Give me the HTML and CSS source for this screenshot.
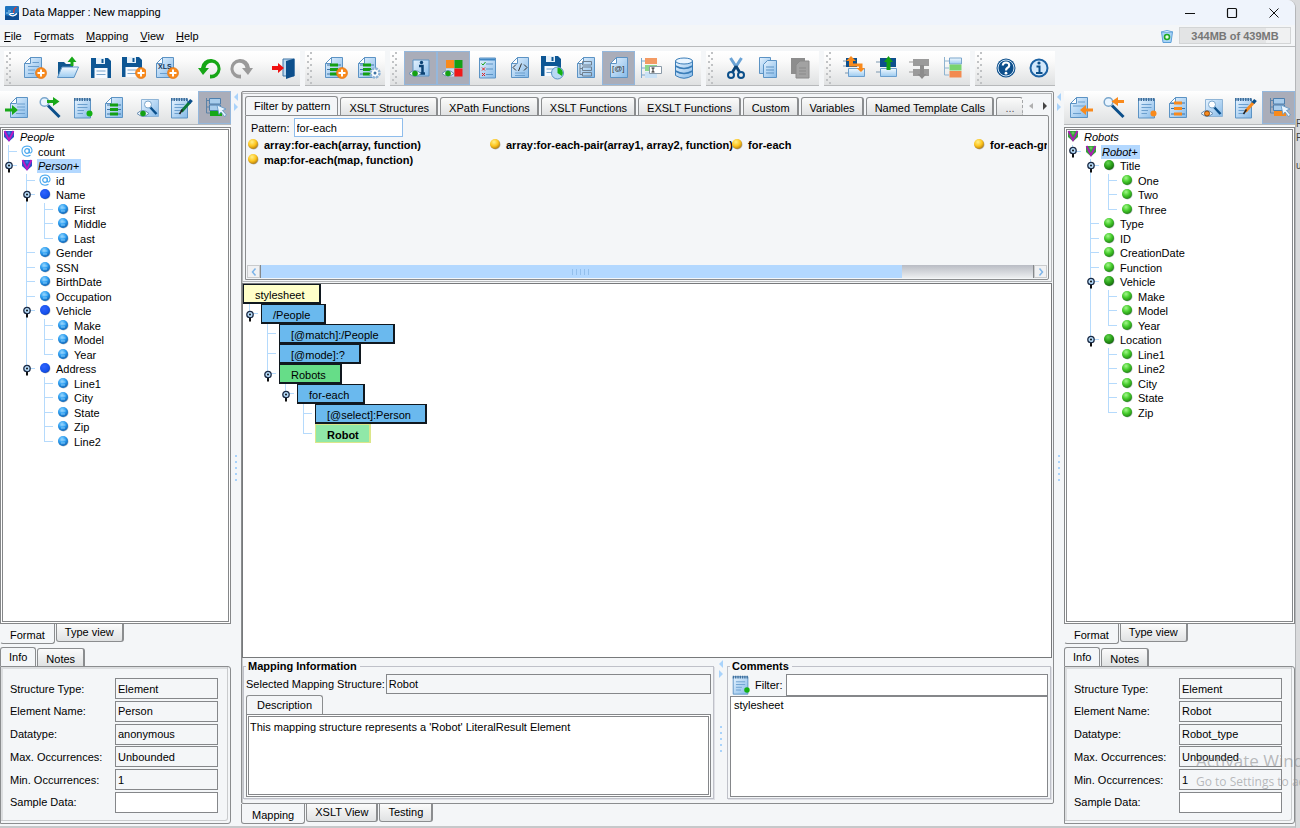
FILE: index.html
```html
<!DOCTYPE html>
<html lang="en">
<head>
<meta charset="utf-8">
<title>Data Mapper : New mapping</title>
<link rel="stylesheet" href="styles.css">
</head>
<body>
<svg class="sprite" aria-hidden="true">
  <defs>
    <linearGradient id="pg" x1="0" y1="0" x2="1" y2="1"><stop offset="0" stop-color="#e6f3ff"/><stop offset="1" stop-color="#86bae8"/></linearGradient>
    <linearGradient id="bx" x1="0" y1="0" x2="0" y2="1"><stop offset="0" stop-color="#f2f9ff"/><stop offset="1" stop-color="#9ccbf0"/></linearGradient>
    <radialGradient id="ball-sky" cx=".4" cy=".3" r=".75"><stop offset="0" stop-color="#8fd4ff"/><stop offset=".5" stop-color="#2b9df0"/><stop offset="1" stop-color="#0f5fae"/></radialGradient>
    <radialGradient id="ball-blue" cx=".4" cy=".35" r=".75"><stop offset="0" stop-color="#2f63ff"/><stop offset=".7" stop-color="#1450ea"/><stop offset="1" stop-color="#0b2f9a"/></radialGradient>
    <radialGradient id="ball-lime" cx=".4" cy=".3" r=".75"><stop offset="0" stop-color="#a4f78c"/><stop offset=".5" stop-color="#45cc2c"/><stop offset="1" stop-color="#1f7a12"/></radialGradient>
    <radialGradient id="ball-green" cx=".4" cy=".3" r=".75"><stop offset="0" stop-color="#66d452"/><stop offset=".5" stop-color="#2da61c"/><stop offset="1" stop-color="#145c0c"/></radialGradient>
    <radialGradient id="ball-gold" cx=".4" cy=".3" r=".75"><stop offset="0" stop-color="#fff08a"/><stop offset=".55" stop-color="#fdc41c"/><stop offset="1" stop-color="#a87412"/></radialGradient>
  </defs>
  <symbol id="page" viewBox="0 0 24 24"><path d="M7.500 1.500H18.500V21.500H1.500V7.500Z" fill="url(#pg)" stroke="#5c93c4"/><path d="M7.500 1.500V7.500H1.500Z" fill="#fff" stroke="#5c93c4"/></symbol>
  <symbol id="plus" viewBox="0 0 24 24"><circle cx="18" cy="17" r="5.500" fill="#f98a1c" stroke="#e06d08" stroke-width=".6"/><path d="M18 13.500V20.500M14.500 17H21.500" stroke="#fff" stroke-width="2"/></symbol>
  <symbol id="eye" viewBox="0 0 24 24"><path d="M0 17.500Q6 11.500 12 17.500Q6 23 0 17.500Z" fill="#e9f2fa" stroke="#6a8fb3"/></symbol>
  <symbol id="new" viewBox="0 0 24 24"><use href="#page"/><path d="M9.500 6.500H16M5 10.500H16M5 14H12M5 17.500H11" stroke="#6b9fce"/><use href="#plus"/></symbol>
  <symbol id="open" viewBox="0 0 24 24"><path d="M2 20V6H8L10 8H17V20Z" fill="#11578f"/><path d="M6 11H22.500L18 21.500H1.500Z" fill="url(#bx)" stroke="#5c93c4"/><path d="M14.500 10V6H11.500L16 .5L20.500 6H17.500V10Z" fill="#18a818"/></symbol>
  <symbol id="save" viewBox="0 0 24 24"><path d="M2 2H19L22 5V22H2Z" fill="#0d5694"/><path d="M7 2H16V8H7Z" fill="#e6f1fa"/><path d="M12.500 3H14.500V7H12.500Z" fill="#0d5694"/><path d="M5.500 12H18.500V22H5.500Z" fill="#f6faff"/><path d="M7.500 15H16.500M7.500 18.500H16.500" stroke="#7aa6cc"/></symbol>
  <symbol id="saveas" viewBox="0 0 24 24"><use href="#save" x="-2" y="-1"/><use href="#plus" x="1" y="0"/></symbol>
  <symbol id="xls" viewBox="0 0 24 24"><use href="#page"/><path d="M5 17.500H12" stroke="#6b9fce"/><text x="3" y="13" class="glyph-xls">XLS</text><use href="#plus"/></symbol>
  <symbol id="undo" viewBox="0 0 24 24"><path d="M1 12L6 19L12 12H8.500A6 6 0 1 1 13 18.500V22.500A9.800 9.800 0 1 0 4 12Z" fill="#16a616"/></symbol>
  <symbol id="redo" viewBox="0 0 24 24"><path d="M23 12L18 19L12 12H15.500A6 6 0 1 0 11 18.500V22.500A9.800 9.800 0 1 1 20 12Z" fill="#9a9a9a"/></symbol>
  <symbol id="exit" viewBox="0 0 24 24"><path d="M11 3H22V20H11Z" fill="#bcd9f0" stroke="#3f74a5"/><path d="M22.500 2.500V20L14 23V5Z" fill="#0d4f8c"/><path d="M0 10H6V7L12 12L6 17V14H0Z" fill="#f01010"/></symbol>
  <symbol id="rows-g" viewBox="0 0 24 24"><use href="#page"/><path d="M3 9H6M14 9H17M3 13.500H6M14 13.500H17M3 18H6M14 18H17" stroke="#3f74a5"/><path d="M6 9H14M6 13.500H14M6 18H14" stroke="#14a014" stroke-width="3"/></symbol>
  <symbol id="rows-o" viewBox="0 0 24 24"><use href="#page"/><path d="M3 7H6M14 7H17M3 12.500H6M14 12.500H17M3 18H6M14 18H17" stroke="#3f74a5"/><path d="M6 7H14M6 12.500H14M6 18H14" stroke="#f98a1c" stroke-width="3"/></symbol>
  <symbol id="rowsadd" viewBox="0 0 24 24"><use href="#rows-g"/><use href="#plus"/></symbol>
  <symbol id="rowscfg" viewBox="0 0 24 24"><use href="#rows-g"/><circle cx="18" cy="17" r="4.500" fill="#fff" stroke="#8fb4d6" stroke-width="2.500" stroke-dasharray="2.500 1"/><circle cx="18" cy="17" r="1.500" fill="#3f74a5"/></symbol>
  <symbol id="infoeye" viewBox="0 0 24 24"><path d="M4 4H20V20H4Z" fill="url(#pg)" stroke="#5c93c4"/><path d="M10 10H13.500V17M10 17.500H16" stroke="#0b4274" stroke-width="2.500" fill="none"/><circle cx="12.500" cy="6.500" r="1.700" fill="#0b4274"/><use href="#eye"/><circle cx="6" cy="17.500" r="2.800" fill="#14a014"/></symbol>
  <symbol id="coloreye" viewBox="0 0 24 24"><path d="M4 4H12V12H4Z" fill="#f98a1c"/><path d="M12.500 4H20.500V12H12.500Z" fill="#14a014"/><path d="M4 12.500H12V20.500H4Z" fill="#c9e1f5"/><path d="M12.500 12.500H20.500V20.500H12.500Z" fill="#f01818"/><use href="#eye"/><circle cx="6" cy="17.500" r="2.800" fill="#14a014"/></symbol>
  <symbol id="check" viewBox="0 0 24 24"><path d="M4.500 2H20.500V22H4.500Z" fill="url(#pg)" stroke="#5c93c4"/><path d="M5 3.500H20" stroke="#3f87c4" stroke-width="2"/><path d="M11 8H18M11 13H18M11 18.500H18" stroke="#5c93c4"/><path d="M6.500 7.500L8 9L10.500 6" stroke="#14a014" fill="none"/><path d="M7 11.500L10 14.500M10 11.500L7 14.500M7 17L10 20M10 17L7 20" stroke="#e02020"/></symbol>
  <symbol id="code" viewBox="0 0 24 24"><use href="#page" x="2" y="0"/><path d="M7 17H17M7 19.500H17" stroke="#6b9fce"/><path d="M8 8.500L5 11.500L8 14.500M16 8.500L19 11.500L16 14.500M13.500 7.500L10.500 15" stroke="#333" fill="none"/></symbol>
  <symbol id="savetime" viewBox="0 0 24 24"><use href="#save" x="-2" y="-2"/><circle cx="16.500" cy="17" r="6" fill="#b9daf4" stroke="#5c93c4"/><path d="M16.500 17V11.500A5.500 5.500 0 0 1 21 20Z" fill="#14b014"/></symbol>
  <symbol id="fields" viewBox="0 0 24 24"><use href="#page" x="2" y="0"/><path d="M8.500 5.500H17.500V9H8.500ZM8.500 11H17.500V14.500H8.500ZM8.500 16.500H17.500V20H8.500ZM6 7.500V18.500H8.500M6 12.500H8.500" fill="none" stroke="#6f7f8f"/></symbol>
  <symbol id="attr" viewBox="0 0 24 24"><use href="#page" x="2" y="0"/><text x="5" y="15" class="glyph-at">[@]</text></symbol>
  <symbol id="rename" viewBox="0 0 24 24"><path d="M1.500 2V22M1.500 5H5M1.500 12H5M1.500 19H5" stroke="#7aa6cc" fill="none"/><path d="M5 2H17V8H5Z" fill="#f39a63"/><path d="M5 9H17V15H5Z" fill="#8ed68b"/><path d="M5 16H17V22H5Z" fill="#c9e1f5"/><path d="M9.500 10.500H21.500V17.500H9.500Z" fill="#fff" stroke="#8a9aa8"/><path d="M11.500 12H14.500M13 12V16M11.500 16H14.500" stroke="#222"/></symbol>
  <symbol id="db" viewBox="0 0 24 24"><path d="M2.500 5V19.500Q11 25 19.500 19.500V5Z" fill="url(#pg)" stroke="#3a7db8"/><ellipse cx="11" cy="5" rx="8.500" ry="3" fill="#eaf5ff" stroke="#3a7db8"/><path d="M2.500 10Q11 15 19.500 10M2.500 15Q11 20 19.500 15" fill="none" stroke="#3a7db8" stroke-width="1.500"/></symbol>
  <symbol id="cut" viewBox="0 0 24 24"><path d="M5.500 2L14.500 16M16.500 2L7.500 16" stroke="#6aa3d6" stroke-width="3"/><path d="M11 10L14.500 16M11 10L7.500 16" stroke="#0b4274" stroke-width="2.500"/><circle cx="6" cy="19" r="3" fill="none" stroke="#0b4f8a" stroke-width="2"/><circle cx="16" cy="19" r="3" fill="none" stroke="#0b4f8a" stroke-width="2"/></symbol>
  <symbol id="copy" viewBox="0 0 24 24"><path d="M1.500 1.500H12.500V17.500H1.500Z" fill="url(#pg)" stroke="#5c93c4"/><path d="M9.500 4.500H18.500V21.500H5.500V8.500Z" fill="url(#pg)" stroke="#5c93c4"/><path d="M8 11H16M8 14H16M8 17H16" stroke="#5c93c4"/></symbol>
  <symbol id="paste" viewBox="0 0 24 24"><path d="M0 2H14V18H0Z" fill="#8d8d8d"/><path d="M9 5H18V22H5V9Z" fill="#a2a2a2" stroke="#8a8a8a"/><path d="M8 12H15M8 15H15M8 18H15" stroke="#8a8a8a"/></symbol>
  <symbol id="swap" viewBox="0 0 24 24"><path d="M0 5H3M0 10H3M2 17H6" stroke="#7a97b0"/><path d="M3 2H14V11H3Z" fill="#0d4f8c"/><path d="M5.500 12.500H21.500V20.500H5.500Z" fill="url(#bx)" stroke="#6b9fce"/><path d="M6 5H3L8 0L13 5H10V7.500H19.500V12H22L18 16L13.500 12H16V10.500H6Z" fill="#f98a1c"/></symbol>
  <symbol id="moveup" viewBox="0 0 24 24"><path d="M0 6H4M0 16H4" stroke="#7a97b0"/><path d="M4 2H20V11H4Z" fill="#0d4f8c"/><path d="M4.500 12.500H20.500V20.500H4.500Z" fill="url(#bx)" stroke="#6b9fce"/><path d="M10.500 14V6H8L12.500 0L17 6H14.500V14Z" fill="#14a014"/></symbol>
  <symbol id="movedn" viewBox="0 0 24 24"><path d="M0 6H4M0 16H4" stroke="#999"/><path d="M4 3H20V10H4ZM4 13H20V20H4Z" fill="#9b9b9b"/><path d="M11 9H15V18H17.500L13 23L8.500 18H11Z" fill="#8c8c8c"/></symbol>
  <symbol id="stack" viewBox="0 0 24 24"><path d="M2.500 1V19H7M2.500 5H7M2.500 12H7" stroke="#8fb4d0" fill="none"/><path d="M7.500 2H19.500V8H7.500Z" fill="url(#bx)" stroke="#7aa6cc"/><path d="M7.500 8.500H19.500V14.500H7.500Z" fill="#79d36e"/><path d="M7.500 15H19.500V21.500H7.500Z" fill="#f28b51"/></symbol>
  <symbol id="help" viewBox="0 0 24 24"><circle cx="12" cy="12" r="9.500" fill="#0d4f8c"/><circle cx="12" cy="12" r="8" fill="none" stroke="#cfe4f6"/><path d="M8.800 9.500Q9 6.500 12 6.500Q15.300 6.500 15.200 9.500Q15.200 11 13.300 12Q12 12.800 12 14.500" fill="none" stroke="#fff" stroke-width="2.200"/><circle cx="12" cy="17.200" r="1.400" fill="#fff"/></symbol>
  <symbol id="about" viewBox="0 0 24 24"><circle cx="12" cy="12" r="8.500" fill="#d3e8fb" stroke="#1d62a3" stroke-width="2"/><path d="M9.500 10.500H12.500V16.500M9 17H15.500" stroke="#0b4f8a" stroke-width="2" fill="none"/><circle cx="12" cy="7" r="1.600" fill="#0b4f8a"/></symbol>
  <symbol id="in-g" viewBox="0 0 24 24"><use href="#page" x="4" y="0"/><path d="M12 8H20M12 11H20M13 14H20M11 17.500H20" stroke="#6b9fce"/><path d="M0 12.500H7V9L13 14L7 19V15.500H0Z" fill="#18a818"/></symbol>
  <symbol id="in-o" viewBox="0 0 24 24"><use href="#page"/><path d="M9 6H16M4 10H16M4 17.500H12" stroke="#6b9fce"/><path d="M24 12.500H17V9L11 14L17 19V15.500H24Z" fill="#f98a1c"/></symbol>
  <symbol id="lens" viewBox="0 0 24 24"><path d="M10 9.500L21.500 21" stroke="#0b4f8a" stroke-width="3"/><circle cx="6.500" cy="6" r="4.300" fill="#eaf5ff" stroke="#7aa6cc" stroke-width="1.500"/></symbol>
  <symbol id="find-g" viewBox="0 0 24 24"><use href="#lens"/><path d="M9 4H15V1L21.500 5.500L15 10V7H9Z" fill="#18a818"/></symbol>
  <symbol id="find-o" viewBox="0 0 24 24"><use href="#lens"/><path d="M22 4H16V1L9.500 5.500L16 10V7H22Z" fill="#f98a1c"/></symbol>
  <symbol id="pad" viewBox="0 0 24 24"><path d="M3.500 3H19.500V22H3.500Z" fill="url(#pg)" stroke="#5c93c4"/><path d="M3 3.500H20" stroke="#3f6f9c" stroke-width="3" stroke-dasharray="1.500 1"/><path d="M6.500 8.500H16.500M6.500 11.500H16.500M6.500 14.500H13M6.500 17.500H12" stroke="#6b9fce"/></symbol>
  <symbol id="note-g" viewBox="0 0 24 24"><use href="#pad"/><circle cx="18.500" cy="17.500" r="3" fill="#14b014"/></symbol>
  <symbol id="note-o" viewBox="0 0 24 24"><use href="#pad"/><circle cx="18.500" cy="17.500" r="3" fill="#f98a1c"/></symbol>
  <symbol id="look" viewBox="0 0 24 24"><path d="M4.500 3.500H21.500V20.500H4.500Z" fill="url(#pg)" stroke="#8fb4d6"/><path d="M13 11L19.500 18" stroke="#0b4f8a" stroke-width="2.500"/><circle cx="11" cy="8.500" r="3.500" fill="#fff" stroke="#7aa6cc"/><use href="#eye"/></symbol>
  <symbol id="look-g" viewBox="0 0 24 24"><use href="#look"/><circle cx="6" cy="17.500" r="2.800" fill="#14a014"/></symbol>
  <symbol id="look-o" viewBox="0 0 24 24"><use href="#look"/><circle cx="6" cy="17.500" r="2.500" fill="#f98a1c" stroke="#8a4a10"/></symbol>
  <symbol id="pen-g" viewBox="0 0 24 24"><use href="#pad" x="-2"/><path d="M19.500 6.500L11.500 15.500" stroke="#0b7a3a" stroke-width="3"/><path d="M21.500 4L19 7" stroke="#0b4f8a" stroke-width="3.500"/><path d="M12.500 13.500L9.500 18" stroke="#222" stroke-width="1.500"/></symbol>
  <symbol id="pen-o" viewBox="0 0 24 24"><use href="#pad" x="-2"/><path d="M19.500 6.500L11.500 15.500" stroke="#f98a1c" stroke-width="3"/><path d="M21.500 4L19 7" stroke="#0b4f8a" stroke-width="3.500"/><path d="M12.500 13.500L9.500 18" stroke="#222" stroke-width="1.500"/></symbol>
  <symbol id="pick" viewBox="0 0 24 24"><path d="M3.500 2V17H7M3.500 4.500H7M3.500 11H7" stroke="#5c82a6" fill="none"/><path d="M6.500 2.500H17.500V8H6.500ZM6.500 9H17.500V14.500H6.500Z" fill="#a9cdec" stroke="#4d7fae"/></symbol>
  <symbol id="cursor" viewBox="0 0 24 24"><path d="M14 9L23 13L19.500 14.500L23.500 19L21.500 20.500L18 16L16 18.500Z" fill="#e9f5ff" stroke="#5c93c4" stroke-width=".8"/></symbol>
  <symbol id="pick-g" viewBox="0 0 24 24"><use href="#pick"/><path d="M7 15H19V20H7Z" fill="#18a818"/><use href="#cursor"/></symbol>
  <symbol id="pick-o" viewBox="0 0 24 24"><use href="#pick"/><path d="M7 15H19V20H7Z" fill="#f98a1c"/><use href="#cursor"/></symbol>
  <symbol id="toggle" viewBox="0 0 18 14"><path d="M9 8V12.500" stroke="#111" stroke-width="2"/><circle cx="9" cy="5.500" r="3.200" fill="#b7dcfa" stroke="#1b2a44" stroke-width="1.300"/><circle cx="9" cy="5.500" r="1" fill="#111"/></symbol>
  <symbol id="sky" viewBox="0 0 12 12"><circle cx="6.500" cy="6.500" r="5" fill="#b9c2ca"/><circle cx="6" cy="6" r="5" fill="url(#ball-sky)"/><path d="M3.500 5H8.500M4 8H8" stroke="#a8ddff" stroke-width=".9" opacity=".8"/></symbol>
  <symbol id="blue" viewBox="0 0 12 12"><circle cx="6.500" cy="6.500" r="5" fill="#b9c2ca"/><circle cx="6" cy="6" r="5" fill="url(#ball-blue)"/></symbol>
  <symbol id="lime" viewBox="0 0 12 12"><circle cx="6.500" cy="6.500" r="5" fill="#b9c2ca"/><circle cx="6" cy="6" r="5" fill="url(#ball-lime)"/></symbol>
  <symbol id="green" viewBox="0 0 12 12"><circle cx="6.500" cy="6.500" r="5" fill="#b9c2ca"/><circle cx="6" cy="6" r="5" fill="url(#ball-green)"/></symbol>
  <symbol id="gold" viewBox="0 0 12 12"><circle cx="6.500" cy="6.500" r="5" fill="#b5b5b5"/><circle cx="6" cy="6" r="5" fill="url(#ball-gold)"/></symbol>
  <symbol id="at" viewBox="0 0 12 12"><circle cx="6" cy="6" r="2.300" fill="none" stroke="#4aa8ee" stroke-width="1.200"/><path d="M8.300 3.800V7Q8.500 8.300 9.800 7.900Q11.300 6.800 11 4.800Q10 1 6 1Q1 1.300 1 6Q1.200 11 6 11.200Q8 11.200 9.500 10.300" fill="none" stroke="#4aa8ee" stroke-width="1.100"/></symbol>
  <symbol id="root-b" viewBox="0 0 12 12"><path d="M1 1H11V7L6 11.500L1 7Z" fill="#2c50c8"/><path d="M1.500 1L6 10L10.500 1" stroke="#c116c4" stroke-width="1.700" fill="none"/><circle cx="6" cy="3" r="1.500" fill="#3f78e8"/></symbol>
  <symbol id="root-g" viewBox="0 0 12 12"><path d="M1 1H11V7L6 11.500L1 7Z" fill="#35a03a"/><path d="M1.500 1L6 10L10.500 1" stroke="#b018b8" stroke-width="1.700" fill="none"/><circle cx="6" cy="3" r="1.500" fill="#62c45a"/></symbol>
</svg>

<div class="desktop">
<div class="window">
  <header class="titlebar">
    <svg class="logo" viewBox="0 0 14 14"><rect width="14" height="14" rx="1" fill="#1f74bf"/><path d="M0 9Q7 12 14 6V14H0Z" fill="#0c4c92"/><path d="M1 7H5M3 5H6" stroke="#9bd0f5"/><path d="M4 8Q8 12 12 7.500M5 7.500H9" stroke="#fff" stroke-width="1.200" fill="none"/><path d="M11.500 1Q8 3 9 7" stroke="#e23a2a" stroke-width="1.200" fill="none"/></svg>
    <h1>Data Mapper : New mapping</h1>
    <div class="winbtns">
      <button aria-label="Minimize"><svg viewBox="0 0 12 12"><path d="M1 6.500H11" stroke="#111"/></svg></button>
      <button aria-label="Maximize"><svg viewBox="0 0 12 12"><rect x="1.500" y="1.500" width="9" height="9" rx="1" fill="none" stroke="#111" stroke-width="1.200"/></svg></button>
      <button aria-label="Close"><svg viewBox="0 0 12 12"><path d="M1.500 1.500L10.500 10.500M10.500 1.500L1.500 10.500" stroke="#111"/></svg></button>
    </div>
  </header>

  <nav class="menubar">
    <button><u>F</u>ile</button><button>F<u>o</u>rmats</button><button><u>M</u>apping</button><button><u>V</u>iew</button><button><u>H</u>elp</button>
    <div class="memory">
      <button class="trash" aria-label="Collect garbage"><svg viewBox="0 0 14 14"><path d="M1.500 3H12.500L11 13.500H3Z" fill="#a9d4f7" stroke="#5c9fd8"/><path d="M1 3Q7 0 13 3" fill="#dff0ff" stroke="#6aa8dc"/><circle cx="7" cy="8" r="2.500" fill="#e8ffe4" stroke="#1fa81f" stroke-width="1.600"/></svg></button>
      <span class="meter">344MB of 439MB</span>
    </div>
  </nav>

  <div class="toolbars">
    <div class="bar">
      <button aria-label="New"><svg><use href="#new"/></svg></button><button aria-label="Open"><svg><use href="#open"/></svg></button><button aria-label="Save"><svg><use href="#save"/></svg></button><button aria-label="Save as"><svg><use href="#saveas"/></svg></button><button aria-label="Export XLS"><svg><use href="#xls"/></svg></button>
      <button class="apart" aria-label="Undo"><svg><use href="#undo"/></svg></button><button aria-label="Redo"><svg><use href="#redo"/></svg></button>
      <button class="apart" aria-label="Exit"><svg><use href="#exit"/></svg></button>
    </div>
    <div class="bar">
      <button aria-label="Add rows"><svg><use href="#rowsadd"/></svg></button><button aria-label="Configure rows"><svg><use href="#rowscfg"/></svg></button>
    </div>
    <div class="bar">
      <button class="on" aria-label="Show information"><svg><use href="#infoeye"/></svg></button><button class="on" aria-label="Show colors"><svg><use href="#coloreye"/></svg></button><button aria-label="Validate"><svg><use href="#check"/></svg></button><button aria-label="Code"><svg><use href="#code"/></svg></button><button aria-label="Auto save"><svg><use href="#savetime"/></svg></button><button aria-label="Fields"><svg><use href="#fields"/></svg></button><button class="on" aria-label="Attributes"><svg><use href="#attr"/></svg></button><button aria-label="Rename"><svg><use href="#rename"/></svg></button><button aria-label="Database"><svg><use href="#db"/></svg></button>
    </div>
    <div class="bar">
      <button aria-label="Cut"><svg><use href="#cut"/></svg></button><button aria-label="Copy"><svg><use href="#copy"/></svg></button><button aria-label="Paste"><svg><use href="#paste"/></svg></button>
    </div>
    <div class="bar">
      <button aria-label="Replace"><svg><use href="#swap"/></svg></button><button aria-label="Move up"><svg><use href="#moveup"/></svg></button><button aria-label="Move down"><svg><use href="#movedn"/></svg></button><button aria-label="Groups"><svg><use href="#stack"/></svg></button>
    </div>
    <div class="bar">
      <button aria-label="Help"><svg><use href="#help"/></svg></button><button aria-label="About"><svg><use href="#about"/></svg></button>
    </div>
  </div>

  <main class="panes">
    <section class="side">
      <div class="tools">
        <button aria-label="Import source"><svg><use href="#in-g"/></svg></button><button aria-label="Find source"><svg><use href="#find-g"/></svg></button><button aria-label="Source notes"><svg><use href="#note-g"/></svg></button><button aria-label="Source rows"><svg><use href="#rows-g"/></svg></button><button aria-label="Preview source"><svg><use href="#look-g"/></svg></button><button aria-label="Edit source"><svg><use href="#pen-g"/></svg></button><button class="on" aria-label="Pick in source"><svg><use href="#pick-g"/></svg></button>
      </div>
      <ul class="tree">
        <li><svg><use href="#root-b"/></svg><em>People</em></li>
        <li><i class="t"></i><svg><use href="#at"/></svg><span>count</span></li>
        <li><button class="e" aria-label="Collapse"><svg><use href="#toggle"/></svg></button><svg><use href="#root-b"/></svg><em class="sel">Person+</em></li>
        <li><i></i><i class="t"></i><svg><use href="#at"/></svg><span>id</span></li>
        <li><i></i><button class="t" aria-label="Collapse"><svg><use href="#toggle"/></svg></button><svg><use href="#blue"/></svg><span>Name</span></li>
        <li><i></i><i class="v"></i><i class="t"></i><svg><use href="#sky"/></svg><span>First</span></li>
        <li><i></i><i class="v"></i><i class="t"></i><svg><use href="#sky"/></svg><span>Middle</span></li>
        <li><i></i><i class="v"></i><i class="e"></i><svg><use href="#sky"/></svg><span>Last</span></li>
        <li><i></i><i class="t"></i><svg><use href="#sky"/></svg><span>Gender</span></li>
        <li><i></i><i class="t"></i><svg><use href="#sky"/></svg><span>SSN</span></li>
        <li><i></i><i class="t"></i><svg><use href="#sky"/></svg><span>BirthDate</span></li>
        <li><i></i><i class="t"></i><svg><use href="#sky"/></svg><span>Occupation</span></li>
        <li><i></i><button class="t" aria-label="Collapse"><svg><use href="#toggle"/></svg></button><svg><use href="#blue"/></svg><span>Vehicle</span></li>
        <li><i></i><i class="v"></i><i class="t"></i><svg><use href="#sky"/></svg><span>Make</span></li>
        <li><i></i><i class="v"></i><i class="t"></i><svg><use href="#sky"/></svg><span>Model</span></li>
        <li><i></i><i class="v"></i><i class="e"></i><svg><use href="#sky"/></svg><span>Year</span></li>
        <li><i></i><button class="e" aria-label="Collapse"><svg><use href="#toggle"/></svg></button><svg><use href="#blue"/></svg><span>Address</span></li>
        <li><i></i><i></i><i class="t"></i><svg><use href="#sky"/></svg><span>Line1</span></li>
        <li><i></i><i></i><i class="t"></i><svg><use href="#sky"/></svg><span>City</span></li>
        <li><i></i><i></i><i class="t"></i><svg><use href="#sky"/></svg><span>State</span></li>
        <li><i></i><i></i><i class="t"></i><svg><use href="#sky"/></svg><span>Zip</span></li>
        <li><i></i><i></i><i class="e"></i><svg><use href="#sky"/></svg><span>Line2</span></li>
      </ul>
      <div class="tabs low"><button class="cur">Format</button><button>Type view</button></div>
      <div class="tabs"><button class="cur">Info</button><button>Notes</button></div>
      <form class="info">
        <label for="s1">Structure Type:</label><input id="s1" readonly value="Element">
        <label for="s2">Element Name:</label><input id="s2" readonly value="Person">
        <label for="s3">Datatype:</label><input id="s3" readonly value="anonymous">
        <label for="s4">Max. Occurrences:</label><input id="s4" readonly value="Unbounded">
        <label for="s5">Min. Occurrences:</label><input id="s5" readonly value="1">
        <label for="s6">Sample Data:</label><input id="s6">
      </form>
    </section>

    <div class="split"><svg class="arrows" viewBox="0 0 6 18"><path d="M5 0V8L1 4ZM1 10V18L5 14Z" fill="#a9d3fb"/></svg><b class="grip"></b></div>

    <section class="work">
      <div class="frame">
        <div class="palette">
          <div class="tabs">
            <button class="cur">Filter by pattern</button><button>XSLT Structures</button><button>XPath Functions</button><button>XSLT Functions</button><button>EXSLT Functions</button><button>Custom</button><button>Variables</button><button>Named Template Calls</button><button class="torn">...</button>
            <div class="scrolltabs"><button aria-label="Previous tabs"><svg viewBox="0 0 6 8"><path d="M5 1V7L1 4Z" fill="#b0b0b0"/></svg></button><button aria-label="Next tabs"><svg viewBox="0 0 6 8"><path d="M1 0V8L5 4Z" fill="#444"/></svg></button></div>
          </div>
          <div class="functions">
            <div class="pattern"><label for="pat">Pattern:</label><input id="pat" value="for-each"></div>
            <ul class="hits">
              <li><svg><use href="#gold"/></svg>array:for-each(array, function)</li>
              <li><svg><use href="#gold"/></svg>array:for-each-pair(array1, array2, function)</li>
              <li><svg><use href="#gold"/></svg>for-each</li>
              <li><svg><use href="#gold"/></svg>for-each-group</li>
              <li><svg><use href="#gold"/></svg>map:for-each(map, function)</li>
            </ul>
            <div class="hscroll"><button aria-label="Scroll left"><svg viewBox="0 0 8 10"><path d="M5.500 1.500L2.500 5L5.500 8.500" fill="none" stroke="#7db4e8" stroke-width="1.500"/></svg></button><div class="track"><div class="thumb"></div></div><button aria-label="Scroll right"><svg viewBox="0 0 8 10"><path d="M2.500 1.500L5.500 5L2.500 8.500" fill="none" stroke="#7db4e8" stroke-width="1.500"/></svg></button></div>
          </div>
        </div>

        <ul class="canvas">
          <li><span class="node root">stylesheet</span></li>
          <li><button class="e" aria-label="Collapse"><svg><use href="#toggle"/></svg></button><span class="node">/People</span></li>
          <li><i></i><i class="t"></i><span class="node">[@match]:/People</span></li>
          <li><i></i><i class="t"></i><span class="node">[@mode]:?</span></li>
          <li><i></i><button class="e" aria-label="Collapse"><svg><use href="#toggle"/></svg></button><span class="node literal">Robots</span></li>
          <li><i></i><i></i><button class="e" aria-label="Collapse"><svg><use href="#toggle"/></svg></button><span class="node">for-each</span></li>
          <li><i></i><i></i><i></i><i class="t"></i><span class="node">[@select]:Person</span></li>
          <li><i></i><i></i><i></i><i class="e"></i><span class="node active">Robot</span></li>
        </ul>

        <div class="details">
          <fieldset>
            <legend>Mapping Information</legend>
            <div class="line"><label for="sel">Selected Mapping Structure:</label><input id="sel" readonly value="Robot"></div>
            <div class="tabs desc"><button class="cur">Description</button></div>
            <div class="text">This mapping structure represents a 'Robot' LiteralResult Element</div>
          </fieldset>
          <div class="split"><svg class="arrows" viewBox="0 0 6 18"><path d="M5 0V8L1 4ZM1 10V18L5 14Z" fill="#a9d3fb"/></svg><b class="grip"></b></div>
          <fieldset>
            <legend>Comments</legend>
            <div class="line filter"><svg><use href="#note-g"/></svg><label for="flt">Filter:</label><input id="flt"></div>
            <ul class="list"><li>stylesheet</li></ul>
          </fieldset>
        </div>
      </div>
      <div class="tabs low"><button class="cur">Mapping</button><button>XSLT View</button><button>Testing</button></div>
    </section>

    <div class="split"><svg class="arrows" viewBox="0 0 6 18"><path d="M5 0V8L1 4ZM1 10V18L5 14Z" fill="#a9d3fb"/></svg><b class="grip"></b></div>

    <section class="side">
      <div class="tools">
        <button aria-label="Import target"><svg><use href="#in-o"/></svg></button><button aria-label="Find target"><svg><use href="#find-o"/></svg></button><button aria-label="Target notes"><svg><use href="#note-o"/></svg></button><button aria-label="Target rows"><svg><use href="#rows-o"/></svg></button><button aria-label="Preview target"><svg><use href="#look-o"/></svg></button><button aria-label="Edit target"><svg><use href="#pen-o"/></svg></button><button class="on" aria-label="Pick in target"><svg><use href="#pick-o"/></svg></button>
      </div>
      <ul class="tree">
        <li><svg><use href="#root-g"/></svg><em>Robots</em></li>
        <li><button class="e" aria-label="Collapse"><svg><use href="#toggle"/></svg></button><svg><use href="#root-g"/></svg><em class="sel">Robot+</em></li>
        <li><i></i><button class="t" aria-label="Collapse"><svg><use href="#toggle"/></svg></button><svg><use href="#green"/></svg><span>Title</span></li>
        <li><i></i><i class="v"></i><i class="t"></i><svg><use href="#lime"/></svg><span>One</span></li>
        <li><i></i><i class="v"></i><i class="t"></i><svg><use href="#lime"/></svg><span>Two</span></li>
        <li><i></i><i class="v"></i><i class="e"></i><svg><use href="#lime"/></svg><span>Three</span></li>
        <li><i></i><i class="t"></i><svg><use href="#lime"/></svg><span>Type</span></li>
        <li><i></i><i class="t"></i><svg><use href="#lime"/></svg><span>ID</span></li>
        <li><i></i><i class="t"></i><svg><use href="#lime"/></svg><span>CreationDate</span></li>
        <li><i></i><i class="t"></i><svg><use href="#lime"/></svg><span>Function</span></li>
        <li><i></i><button class="t" aria-label="Collapse"><svg><use href="#toggle"/></svg></button><svg><use href="#green"/></svg><span>Vehicle</span></li>
        <li><i></i><i class="v"></i><i class="t"></i><svg><use href="#lime"/></svg><span>Make</span></li>
        <li><i></i><i class="v"></i><i class="t"></i><svg><use href="#lime"/></svg><span>Model</span></li>
        <li><i></i><i class="v"></i><i class="e"></i><svg><use href="#lime"/></svg><span>Year</span></li>
        <li><i></i><button class="e" aria-label="Collapse"><svg><use href="#toggle"/></svg></button><svg><use href="#green"/></svg><span>Location</span></li>
        <li><i></i><i></i><i class="t"></i><svg><use href="#lime"/></svg><span>Line1</span></li>
        <li><i></i><i></i><i class="t"></i><svg><use href="#lime"/></svg><span>Line2</span></li>
        <li><i></i><i></i><i class="t"></i><svg><use href="#lime"/></svg><span>City</span></li>
        <li><i></i><i></i><i class="t"></i><svg><use href="#lime"/></svg><span>State</span></li>
        <li><i></i><i></i><i class="e"></i><svg><use href="#lime"/></svg><span>Zip</span></li>
      </ul>
      <div class="tabs low"><button class="cur">Format</button><button>Type view</button></div>
      <div class="tabs"><button class="cur">Info</button><button>Notes</button></div>
      <form class="info">
        <label for="t1">Structure Type:</label><input id="t1" readonly value="Element">
        <label for="t2">Element Name:</label><input id="t2" readonly value="Robot">
        <label for="t3">Datatype:</label><input id="t3" readonly value="Robot_type">
        <label for="t4">Max. Occurrences:</label><input id="t4" readonly value="Unbounded">
        <label for="t5">Min. Occurrences:</label><input id="t5" readonly value="1">
        <label for="t6">Sample Data:</label><input id="t6">
      </form>
    </section>
  </main>
</div>
<aside class="behind"><span>Re</span><span>F</span><span class="gap">u</span></aside>
<div class="watermark"><p>Activate Windows</p><small>Go to Settings to activate Windows.</small></div>
</div>
</body>
</html>
```

FILE: styles.css
```css
* { box-sizing: border-box; }

body {
  margin: 0;
  font: 11px/14px "Liberation Sans", Arial, sans-serif;
  color: #000;
}

ul, h1, p, fieldset { margin: 0; padding: 0; list-style: none; }
button, input { font: inherit; color: inherit; margin: 0; padding: 0; border: 0; border-radius: 0; background: none; }
button { flex: none; white-space: nowrap; }
input { min-width: 0; outline: 0; }
svg { display: block; flex: none; }
.sprite { position: absolute; width: 0; height: 0; }
.glyph-xls { font: bold 7px "Liberation Sans", sans-serif; fill: #12355a; }
.glyph-at { font: 8px "Liberation Sans", sans-serif; fill: #333; }

.desktop {
  position: relative;
  display: flex;
  height: 100vh;
  overflow: hidden;
  background: #d9dadc;
}

.window {
  flex: 1;
  min-width: 0;
  display: flex;
  flex-direction: column;
  background: #f4f6f8;
  border-right: 1px solid #b4b6b9;
  border-bottom: 2px solid #c6c8ca;
  border-radius: 0 8px 0 0;
}

.behind { width: 4px; padding-top: 117px; overflow: hidden; }
.behind span { display: block; font-size: 10px; color: #444; }
.behind .gap { margin-top: 14px; }

/* Title and menu */
.titlebar {
  display: flex;
  align-items: center;
  gap: 3px;
  height: 25px;
  padding-left: 5px;
  background: #eff4fc;
  border-radius: 0 8px 0 0;
}
.logo { width: 14px; height: 14px; }
.titlebar h1 { flex: 1; font: 11px/16px Roboto, "Open Sans", sans-serif; }
.winbtns { display: flex; }
.winbtns button { width: 42px; display: grid; place-items: center; }
.winbtns svg { width: 12px; height: 12px; }

.menubar {
  display: flex;
  align-items: center;
  gap: 12px;
  height: 22px;
  padding: 0 4px;
  border-bottom: 1px solid #b9bbbd;
}
.memory { display: flex; align-items: center; gap: 5px; margin-left: auto; }
.trash svg { width: 14px; height: 14px; }
.meter {
  width: 112px;
  height: 17px;
  line-height: 16px;
  text-align: center;
  font-weight: bold;
  color: #777;
  border: 1px solid #d3d5d6;
  background: linear-gradient(90deg, #e3e4e5 78%, #f0f1f2 78%);
}

/* Toolbars */
.toolbars { display: flex; gap: 5px; padding: 4px 4px 5px; }
.bar {
  display: flex;
  padding-left: 14px;
  height: 35px;
  border-bottom: 1px solid #b7b9bb;
  background:
    radial-gradient(circle at 1px 1px, #c0c2c4 1px, transparent 1px) 2px 4px / 4px 6px repeat-y,
    radial-gradient(circle at 1px 1px, #c0c2c4 1px, transparent 1px) 5px 7px / 4px 6px repeat-y,
    linear-gradient(#fff, #fafafa 30%, #dfe1e2);
}
.bar button { width: 33px; display: grid; place-items: center; }
.bar .apart { margin-left: 9px; }
.bar svg, .tools svg { width: 24px; height: 24px; }
.bar .on, .tools .on { background: #aaadb9; border: 1px solid #94b7dc; }

.panes { flex: 1; min-height: 0; display: grid; grid-template-columns: 231px 10px 1fr 10px 231px; padding-bottom: 2px; }

/* Splitters */
.split { display: flex; flex-direction: column; align-items: center; padding-top: 2px; }
.split .arrows { width: 6px; height: 18px; }
.grip {
  width: 6px;
  height: 30px;
  margin: auto;
  background: radial-gradient(circle, #a9d3fb 1px, transparent 1px) 0 0 / 6px 6px;
}

/* Side panes */
.side { display: flex; flex-direction: column; min-height: 0; }
.tools {
  display: grid;
  grid-template-columns: repeat(7, 1fr);
  height: 34px;
  margin-bottom: 2px;
  padding-left: 1px;
  background: linear-gradient(#fff, #dfe1e2);
  border-bottom: 1px solid #b7b9bb;
}
.tools button { display: grid; place-items: center; }

.tree { flex: 1; min-height: 0; border: 3px double #858789; background: #fff; overflow: hidden; }
.tree li { display: flex; height: 15px; margin-left: -3px; line-height: 14px; }
.tree li:nth-child(even) { height: 14px; }
.tree li > svg { width: 12px; height: 12px; margin: 0 5px 0 3px; }
.tree .sel { height: 14px; padding: 0 2px 0 1px; margin-left: -1px; background: #b3d8ff; }

.tree i, .tree button, .canvas i, .canvas button { flex: none; width: 18px; align-self: stretch; background-repeat: no-repeat; }
.tree button svg, .canvas button svg { width: 18px; height: 14px; }
.v { background-image: linear-gradient(#b5dafc, #b5dafc); background-position: 8px 0; background-size: 1px 100%; }
.t { background-image: linear-gradient(#b5dafc, #b5dafc), linear-gradient(#b5dafc, #b5dafc); background-position: 8px 0, 8px 6px; background-size: 1px 100%, 9px 1px; }
.e { background-image: linear-gradient(#b5dafc, #b5dafc), linear-gradient(#b5dafc, #b5dafc); background-position: 8px 0, 8px 6px; background-size: 1px 7px, 9px 1px; }

/* Tabs */
.tabs { display: flex; align-items: flex-end; gap: 1px; height: 19px; flex: none; }
.tabs > button {
  height: 18px;
  padding: 2px 8px 0;
  border: 1px solid #8b8d8f;
  border-bottom: 0;
  border-right-width: 2px;
  border-radius: 3px 3px 0 0;
  background: linear-gradient(#fbfbfb, #e0e2e3);
}
.tabs > .cur { height: 19px; padding-top: 0; background: #f4f6f8; border-right-width: 1px; }
.tabs.low { align-items: flex-start; height: 20px; }
.tabs.low > button { height: 18px; padding: 0 8px 2px; border: 1px solid #8b8d8f; border-top: 0; border-right-width: 2px; border-radius: 0 0 3px 3px; }
.tabs.low > .cur { height: 20px; padding: 2px 9px 0; border-right-width: 1px; }
.side .tabs.low { margin-bottom: 3px; }
.side .tabs.low .cur { border-left-color: transparent; }
.work > .tabs.low .cur { padding: 2px 10px 0; }

.info {
  display: grid;
  grid-template-columns: 105px 103px;
  align-content: space-between;
  align-items: center;
  height: 158px;
  padding: 11px 9px 10px;
  border: 1px solid #8b8d8f;
  border-radius: 0 3px 3px 0;
  box-shadow: inset -3px -3px 0 -1px #f4f6f8, inset -3px -3px 0 #c9cbcd, inset 2px 2px 0 #dcdee0;
}
.info input { height: 21px; }
input { border: 1px solid #85878a; padding: 0 2px; background: #fff; }
input[readonly] { background: #f4f6f8; }

/* Work area */
.work { display: flex; flex-direction: column; min-width: 0; min-height: 0; }
.frame { flex: 1; min-height: 0; display: flex; flex-direction: column; padding: 1px 1px 1px 0; border: 1px solid #8b8d8f; border-radius: 2px; box-shadow: inset 1px 0 0 #c9cbcd; }
.palette { padding: 2px 2px 1px; border: 1px solid #b4b6b8; }
.palette .tabs > button { padding: 2px 7px 0 8px; }
.palette .tabs > .cur { padding-top: 0; }
.palette .tabs > button + button { margin-left: 1px; }
.palette .tabs > .torn { width: 27px; border-right: 1px dashed #a5a7a9; color: #555; }
.scrolltabs { display: flex; align-self: center; gap: 8px; margin-left: 4px; }
.scrolltabs svg { width: 6px; height: 8px; }

.functions {
  display: flex;
  flex-direction: column;
  height: 165px;
  padding: 2px 1px 0;
  border: 1px solid #8b8d8f;
  border-radius: 0 2px 2px 0;
}
.pattern { display: flex; align-items: center; gap: 4px; padding-left: 4px; }
.pattern input { width: 109px; height: 19px; border: 1px solid #8fbdec; }
.hits {
  flex: 1;
  display: grid;
  grid-template-columns: repeat(4, 242px);
  grid-auto-rows: 15px;
  overflow: hidden;
  font-weight: bold;
}
.hits li { display: flex; line-height: 16px; white-space: nowrap; }
.hits svg { width: 12px; height: 12px; margin: 1px 5px 0 0; }

.hscroll { display: flex; height: 13px; margin-bottom: 1px; }
.hscroll button { width: 13px; display: grid; place-items: center; border: 1px solid #c9cbcd; background: #f0f1f3; }
.hscroll button svg { width: 8px; height: 10px; }
.track { flex: 1; background: linear-gradient(#b9bcc4, #eceef0); border: solid #85888b; border-width: 0 1px; }
.thumb {
  width: 83%;
  height: 100%;
  background: repeating-linear-gradient(90deg, #93bfec 0 1px, transparent 1px 4px) center / 18px 6px no-repeat, #b3d8ff;
}

.canvas { flex: 1; min-height: 0; margin-top: 1px; border: 1px solid #77797b; background: #fff; overflow: hidden; }
.canvas li { display: flex; height: 20px; }
.canvas .t, .canvas .e { background-position: 6px 0, 6px 9px; }
.canvas .e { background-size: 1px 10px, 9px 1px; }
.canvas button { padding-top: 3px; display: block; }
.canvas button svg { margin-left: -2px; }
.node {
  height: 20px;
  padding: 3px 14px 0 11px;
  line-height: 14px;
  border: solid #10181f;
  border-width: 1px 2px 2px 1px;
  background: #6ab9ee;
}
.root { background: #ffffc9; }
.literal { background: #66dd88; }
.active { height: 19px; padding: 3px 10px 0 11px; font-weight: bold; background: #90e8a8; border: 1px solid #dbe68a; border-width: 1px 2px 1px 1px; }

.details { display: grid; grid-template-columns: 471px 13px 1fr; height: 144px; padding: 0 1px 3px; }
fieldset { display: flex; flex-direction: column; min-width: 0; padding: 0 2px 1px; border: 1px solid #bfc1c9; box-shadow: 1px 1px 0 #dfe0e6; }
legend { padding: 1px 3px 0 2px; line-height: 15px; font-weight: bold; }
.line { display: flex; align-items: center; gap: 1px; }
.line label { white-space: nowrap; }
.line input { flex: 1; height: 20px; }
.filter { gap: 3px; }
.filter svg { width: 22px; height: 22px; }
.filter input { height: 22px; }
.desc { height: 20px; }
.desc > .cur { padding: 0 10px; }
.text { flex: 1; padding: 3px 1px; border: 3px double #85878a; background: #fff; }
.list { flex: 1; padding: 1px 3px; border: 1px solid #85878a; background: #fff; }

.watermark {
  position: absolute;
  left: calc(100% - 104px);
  bottom: 37px;
  white-space: nowrap;
  pointer-events: none;
  font-family: "Open Sans", "Noto Sans", sans-serif;
  color: rgba(140, 142, 145, .6);
}
.watermark p { font-size: 17px; line-height: 24px; }
.watermark small { display: block; font-size: 12px; line-height: 18px; }
```
